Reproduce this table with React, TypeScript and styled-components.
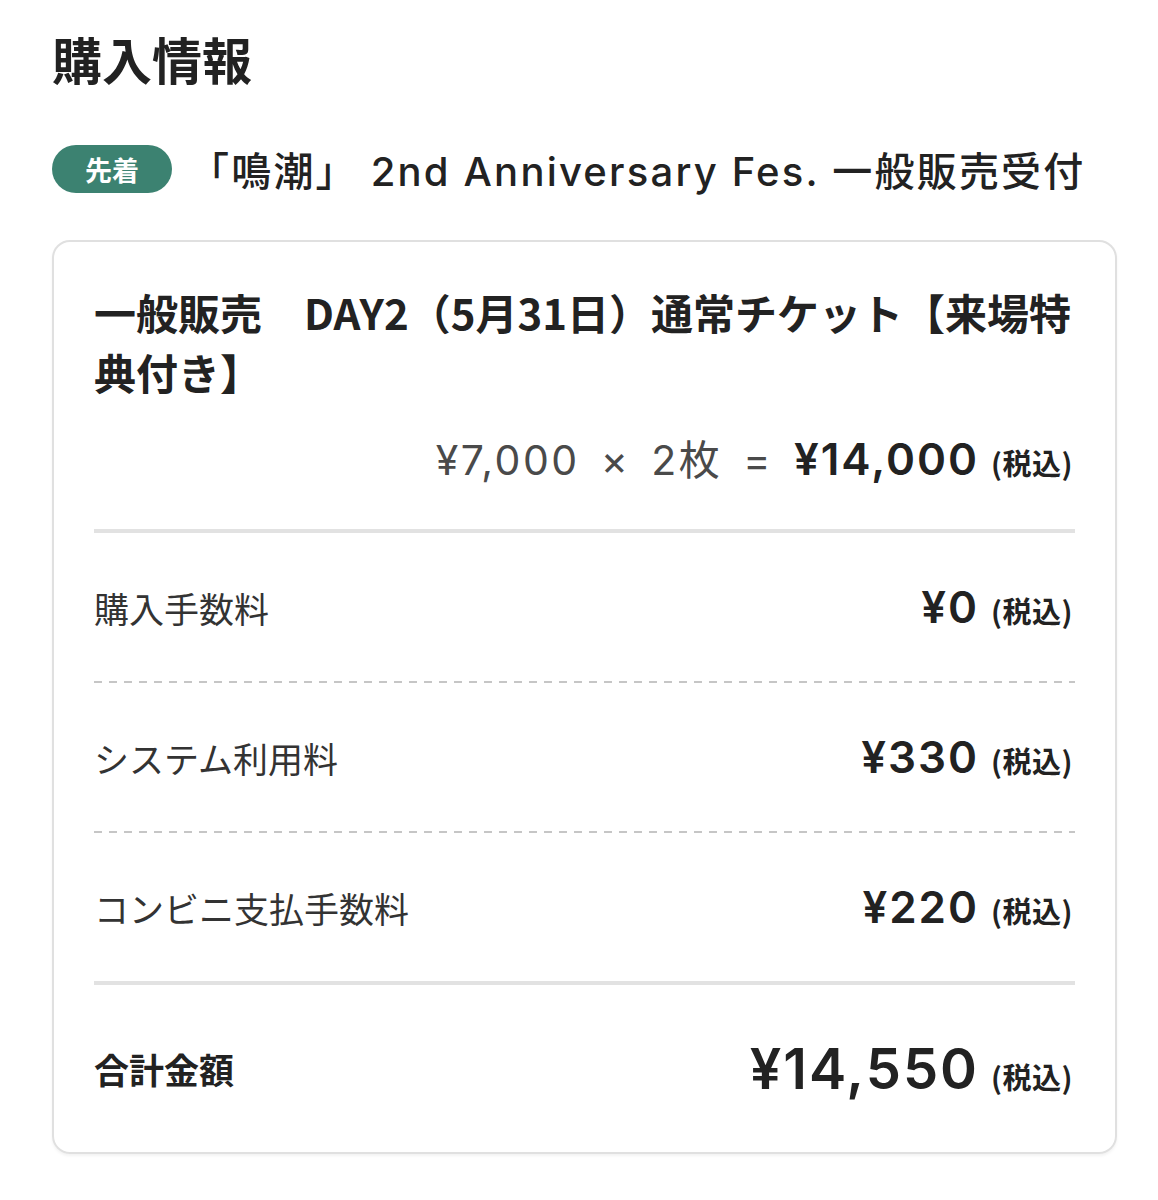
import React from 'react'
import styled, { createGlobalStyle } from 'styled-components'

const GlobalStyle = createGlobalStyle`
  body {
    margin: 0;
    background: #fff;
    font-family: Inter, 'Noto Sans CJK JP', sans-serif;
    color: #222;
  }
`

const Page = styled.div`
  padding: 22px 41px 40px 52px;
`

const PageTitle = styled.h1`
  margin: 0;
  font-family: 'Noto Sans CJK JP', sans-serif;
  font-size: 50px;
  font-weight: 700;
  line-height: 72px;
  color: #222;
`

const EventRow = styled.div`
  display: flex;
  align-items: center;
  gap: 17px;
  margin-top: 46px;
`

const Badge = styled.span`
  display: inline-flex;
  align-items: center;
  justify-content: center;
  width: 120px;
  height: 48px;
  border-radius: 24px;
  background: #3c8271;
  color: #fff;
  font-family: 'Noto Sans CJK JP', sans-serif;
  font-size: 27px;
  font-weight: 700;
`

const EventName = styled.div`
  font-family: Inter, 'Noto Sans CJK JP', sans-serif;
  font-size: 40px;
  font-weight: 500;
  letter-spacing: 2.2px;
  color: #222;
  white-space: nowrap;
`

const Card = styled.div`
  margin-top: 42px;
  border: 2px solid #e0e0e0;
  border-radius: 18px;
  padding: 40px 40px 0 40px;
  box-shadow: 0 2px 3px rgba(0, 0, 0, 0.05);
`

const TicketName = styled.div`
  font-family: 'Noto Sans CJK JP', sans-serif;
  font-size: 42px;
  font-weight: 700;
  line-height: 60px;
  color: #222;
`

const PriceLine = styled.div`
  display: flex;
  justify-content: flex-end;
  align-items: baseline;
  gap: 21px;
  height: 60px;
  line-height: 60px;
  margin-top: 27px;
  padding-right: 2px;
`

const UnitPart = styled.span`
  font-family: Inter, 'Noto Sans CJK JP', sans-serif;
  font-size: 41px;
  font-weight: 400;
  letter-spacing: 2.5px;
  color: #4a4a4a;
`

const AmountGroup = styled.span`
  display: inline-flex;
  align-items: baseline;
`

const Amount = styled.span<{ size?: number }>`
  font-family: Inter, 'Noto Sans CJK JP', sans-serif;
  font-size: ${p => p.size || 44}px;
  font-weight: 600;
  letter-spacing: 2px;
  color: #222;
`

const Tax = styled.span`
  margin-left: 12px;
  font-family: 'Noto Sans CJK JP', sans-serif;
  font-size: 29px;
  font-weight: 700;
  letter-spacing: 0.5px;
  color: #222;
`

const SolidRule = styled.div<{ gap?: number }>`
  height: 4px;
  background: #e2e2e2;
  margin-top: ${p => p.gap || 0}px;
`

const DashedRule = styled.div`
  height: 2px;
  background: repeating-linear-gradient(to right, #c6c6c6 0 8px, transparent 8px 15px);
`

const FeeRow = styled.div<{ total?: boolean }>`
  display: flex;
  justify-content: space-between;
  align-items: center;
  height: ${p => (p.total ? 167 : 148)}px;
`

const FeeLabel = styled.span<{ total?: boolean }>`
  font-family: 'Noto Sans CJK JP', sans-serif;
  font-size: 35px;
  font-weight: ${p => (p.total ? 700 : 400)};
  color: ${p => (p.total ? '#222' : '#333')};
`

const FeeValue = styled.div`
  display: flex;
  align-items: baseline;
  padding-right: 2px;
`

const fees = [
  { label: '購入手数料', value: '¥0' },
  { label: 'システム利用料', value: '¥330' },
  { label: 'コンビニ支払手数料', value: '¥220' }
]

export default function App() {
  return (
    <>
      <GlobalStyle />
      <Page>
        <PageTitle>購入情報</PageTitle>
        <EventRow>
          <Badge>先着</Badge>
          <EventName>「鳴潮」 2nd Anniversary Fes. 一般販売受付</EventName>
        </EventRow>
        <Card>
          <TicketName>一般販売　DAY2（5月31日）通常チケット【来場特典付き】</TicketName>
          <PriceLine>
            {['¥7,000', '×', '2枚', '='].map(part => (
              <UnitPart key={part}>{part}</UnitPart>
            ))}
            <AmountGroup>
              <Amount>¥14,000</Amount>
              <Tax>(税込)</Tax>
            </AmountGroup>
          </PriceLine>
          <SolidRule gap={40} />
          {fees.map((fee, i) => (
            <React.Fragment key={fee.label}>
              {i > 0 && <DashedRule />}
              <FeeRow>
                <FeeLabel>{fee.label}</FeeLabel>
                <FeeValue>
                  <Amount>{fee.value}</Amount>
                  <Tax>(税込)</Tax>
                </FeeValue>
              </FeeRow>
            </React.Fragment>
          ))}
          <SolidRule />
          <FeeRow total>
            <FeeLabel total>合計金額</FeeLabel>
            <FeeValue>
              <Amount size={56}>¥14,550</Amount>
              <Tax>(税込)</Tax>
            </FeeValue>
          </FeeRow>
        </Card>
      </Page>
    </>
  )
}
